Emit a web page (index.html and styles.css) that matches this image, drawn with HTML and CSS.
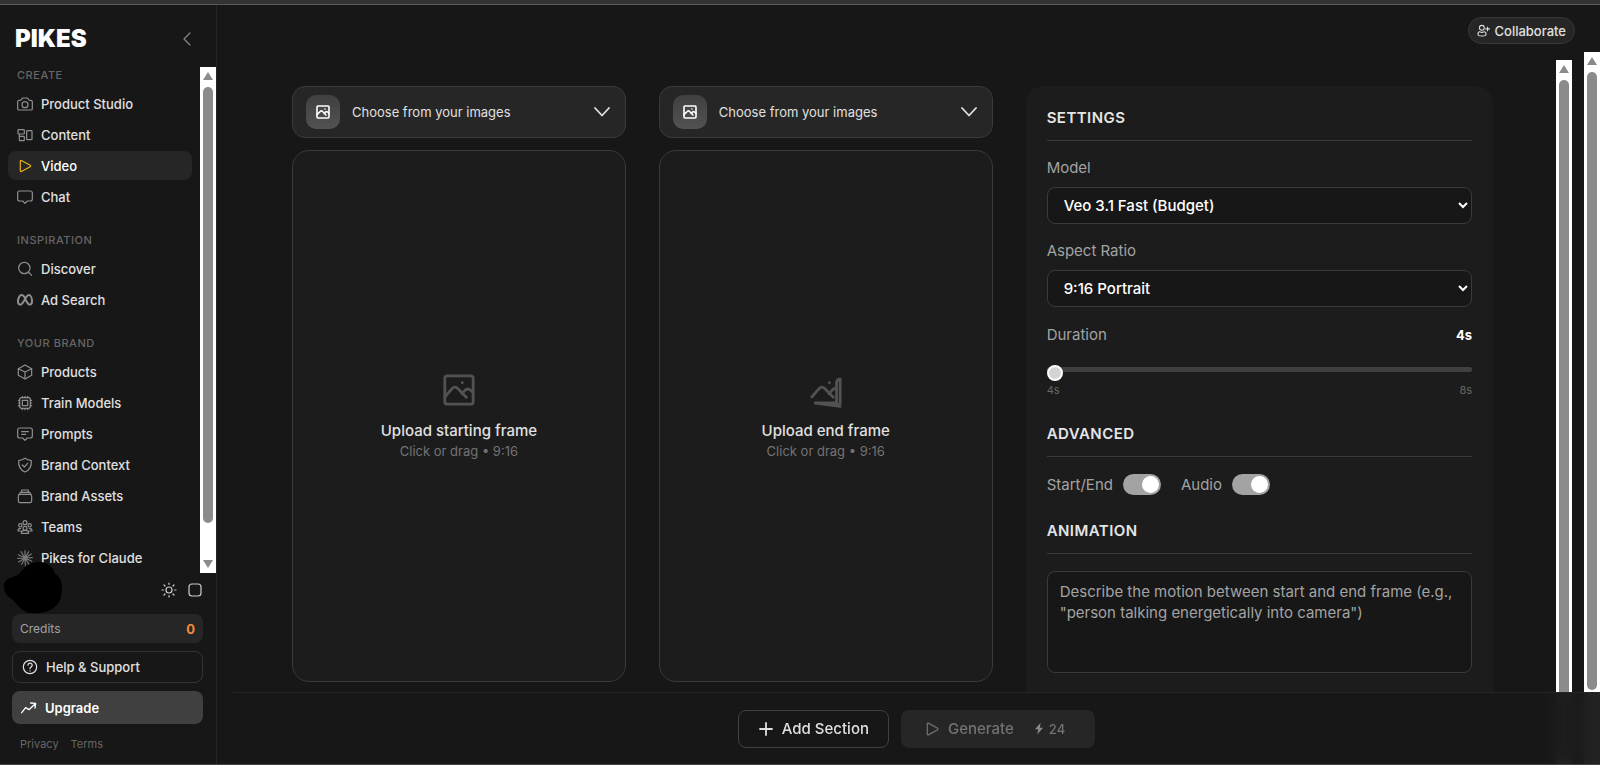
FILE: index.html
```html
<!DOCTYPE html>
<html lang="en">
<head>
    <meta charset="UTF-8">
    <meta name="viewport" content="width=device-width, initial-scale=1.0">
    <title>Pikes - Video</title>
    <link rel="stylesheet" href="styles.css">
</head>
<body>
    <div class="app">
        <aside class="sidebar">
            <div class="sidebar-head">
                <span class="logo">PIKES</span>
                <button class="collapse" aria-label="Collapse sidebar">
                    <svg class="icon" viewBox="0 0 16 16"><path d="M11 2L5 8L11 14"/></svg>
                </button>
            </div>

            <div class="nav-wrap">
                <nav class="nav">
                    <h2>Create</h2>
                    <a href="#"><svg class="icon" viewBox="0 0 24 24"><path d="M1 19V9C1 7.900 1.900 6.500 3.500 6.500H4.500C5.100 6.500 5.700 6.200 6.100 5.700L8 3.400C8.300 3.100 8.600 3 9 3H15C15.400 3 15.700 3.100 16 3.400L17.900 5.700C18.300 6.200 18.900 6.500 19.500 6.500H20.500C22.100 6.500 23 7.900 23 9V19C23 20.100 22.100 21 21 21H3C1.900 21 1 20.100 1 19Z"/><circle cx="12" cy="13" r="4.500"/></svg>Product Studio</a>
                    <a href="#"><svg class="icon" viewBox="0 0 24 24"><rect x="1.500" y="4" width="9.500" height="6.500" rx="1"/><rect x="3.500" y="14" width="7.500" height="6.500" rx="1"/><rect x="14.500" y="5.500" width="8" height="13.500" rx="1"/><path d="M3.500 10.500V14"/></svg>Content</a>
                    <a href="#" class="active"><svg class="icon" viewBox="0 0 24 24"><path d="M5 4.700V19.300C5 20.200 5.900 20.700 6.600 20.300L19.800 13C20.600 12.600 20.600 11.400 19.800 11L6.600 3.700C5.900 3.300 5 3.800 5 4.700Z"/></svg>Video</a>
                    <a href="#"><svg class="icon" viewBox="0 0 24 24"><path d="M1 15V6C1 4.300 2.300 3 4 3H20C21.700 3 23 4.300 23 6V15C23 16.700 21.700 18 20 18H15.500L12 21.500L8.500 18H4C2.300 18 1 16.700 1 15Z"/></svg>Chat</a>

                    <h2>Inspiration</h2>
                    <a href="#"><svg class="icon" viewBox="0 0 24 24"><circle cx="11" cy="10.500" r="8.500"/><path d="M17 16.500L22 21.500"/></svg>Discover</a>
                    <a href="#"><svg class="icon meta" viewBox="0 0 24 24"><path d="M12 9C10.500 6 9 4.500 7 4.500C4 4.500 1.500 9 1.500 14C1.500 17 2.700 19 5 19C7.500 19 9.500 15.500 12 11C14 7.500 15 4.500 17.500 4.500C20.500 4.500 22.500 9 22.500 14C22.500 17 21.300 19 19 19C16.500 19 14.800 15.500 12 10"/></svg>Ad Search</a>

                    <h2>Your Brand</h2>
                    <a href="#"><svg class="icon" viewBox="0 0 24 24"><path d="M12 1.500L22 7V17L12 22.500L2 17V7Z"/><path d="M2 7L12 12L22 7M12 12V22"/></svg>Products</a>
                    <a href="#"><svg class="icon" viewBox="0 0 24 24"><rect x="4" y="4" width="16" height="16" rx="3"/><rect x="8" y="8" width="8" height="8"/><path d="M8 2V4M12 2V4M16 2V4M8 20V22M12 20V22M16 20V22M2 8H4M2 12H4M2 16H4M20 8H22M20 12H22M20 16H22"/></svg>Train Models</a>
                    <a href="#"><svg class="icon" viewBox="0 0 24 24"><path d="M1 15V6C1 4.300 2.300 3 4 3H20C21.700 3 23 4.300 23 6V15C23 16.700 21.700 18 20 18H15.500L12 21.500L8.500 18H4C2.300 18 1 16.700 1 15Z"/><path d="M7 8.500H17M7 12.500H13"/></svg>Prompts</a>
                    <a href="#"><svg class="icon" viewBox="0 0 24 24"><path d="M2.500 5.500C6 5 9 4 12 2C15 4 18 5 21.500 5.500C22 13 19 19.500 12 22.500C5 19.500 2 13 2.500 5.500Z"/><path d="M8 12L11 15L16 9.500"/></svg>Brand Context</a>
                    <a href="#"><svg class="icon" viewBox="0 0 24 24"><rect x="2" y="9.500" width="20" height="12.500" rx="2.500"/><path d="M3.500 9.500L5 6.500H19L20.500 9.500M7 6V3H17V6"/></svg>Brand Assets</a>
                    <a href="#"><svg class="icon" viewBox="0 0 24 24"><circle cx="12" cy="5.500" r="3"/><circle cx="5" cy="9.500" r="2.500"/><circle cx="19" cy="9.500" r="2.500"/><circle cx="12" cy="14" r="3"/><path d="M6.500 21.500C6.500 18.500 9 17 12 17S17.500 18.500 17.500 21.500ZM1.500 18C1.500 15.500 3 14 5.500 14M22.500 18C22.500 15.500 21 14 18.500 14M1.500 18H6.500M17.500 18H22.500"/></svg>Teams</a>
                    <a href="#"><svg class="icon claude" viewBox="0 0 24 24"><path d="M12 12V1M12 12L17.500 2.500M12 12L21.500 6M12 12L23 11.500M12 12L22 17M12 12L18 21.500M12 12L12.500 23M12 12L7 21.500M12 12L2.500 18M12 12L1 12.500M12 12L2 7M12 12L6 2.500"/></svg>Pikes for Claude</a>
                </nav>
                <div class="scrollbar">
                    <i class="arrow up"></i>
                    <i class="thumb nav-thumb"></i>
                    <i class="arrow down"></i>
                </div>
            </div>

            <div class="sidebar-foot">
                <div class="user-row">
                    <svg class="avatar" viewBox="0 0 60 52"><path d="M1 22C3 16 10 15 15 13C20 8 24 1 34 0C43 -1 50 4 52 12C56 14 59 18 59 25C59 35 57 42 49 47C42 51 36 52 28 51C21 51 16 45 11 39C6 35 0 32 1 22Z"/></svg>
                    <button aria-label="Toggle theme"><svg class="icon" viewBox="0 0 24 24"><circle cx="12" cy="12" r="4.500"/><path d="M12 1.500V3.500M12 20.500V22.500M1.500 12H3.500M20.500 12H22.500M4.500 4.500L6 6M18 18L19.500 19.500M4.500 19.500L6 18M18 6L19.500 4.500"/></svg></button>
                    <button aria-label="Toggle layout"><svg class="icon" viewBox="0 0 24 24"><rect x="3" y="3" width="18" height="18" rx="4.500"/></svg></button>
                </div>
                <div class="credits"><span>Credits</span><b>0</b></div>
                <button class="side-button help"><svg class="icon" viewBox="0 0 24 24"><circle cx="12" cy="12" r="10"/><path d="M9 9.300C9 5.300 15.300 5.300 15.300 9.300C15.300 12 12 11.800 12 14.500M12 17.800V17.900"/></svg>Help &amp; Support</button>
                <button class="side-button upgrade"><svg class="icon" viewBox="0 0 24 24"><path d="M1 19L7 11.500L12 14.500L21 6M14.500 4.500L22 5L21 12"/></svg>Upgrade</button>
                <div class="legal"><a href="#">Privacy</a><a href="#">Terms</a></div>
            </div>
        </aside>

        <main class="main">
            <header class="topbar">
                <button class="collaborate"><svg class="icon" viewBox="0 0 24 24"><circle cx="9" cy="7" r="4.500"/><path d="M2.500 21C0.500 17 3 14 5.500 14.500C8 16 10 16 12.500 14.500C16 14 17.500 17.500 16 21C14 22.500 4.500 22.500 2.500 21ZM16 9H23M19.500 5.500V12.500"/></svg>Collaborate</button>
            </header>

            <div class="stage">
                <div class="page">
                    <div class="workspace">
                        <section class="frame">
                            <button class="picker">
                                <span class="tile"><svg class="icon" viewBox="0 0 24 24"><rect x="3" y="3" width="18" height="18" rx="1.500"/><path d="M3 16L7.800 11.200Q9.600 9.400 11.400 11.200L16.400 16.400M13.800 14.200L15.600 12.200Q17.200 10.600 18.800 12L21 14M15 7.500V7.600"/></svg></span>
                                <span>Choose from your images</span>
                                <svg class="icon chevron" viewBox="0 0 16 16"><path d="M1 4L8 11.500L15 4"/></svg>
                            </button>
                            <button class="dropzone">
                                <svg class="icon" viewBox="0 0 24 24"><rect x="3.500" y="3.500" width="17" height="17" rx="1.500"/><path d="M3.500 16.200L7.800 11.200Q9.600 9.400 11.400 11.200L16.400 16.400M13.800 14.200L15.600 12.200Q17.200 10.600 18.800 12L20.500 13.500M14 7.600V7.700"/></svg>
                                <strong>Upload starting frame</strong>
                                <small>Click or drag • 9:16</small>
                            </button>
                        </section>

                        <section class="frame">
                            <button class="picker">
                                <span class="tile"><svg class="icon" viewBox="0 0 24 24"><rect x="3" y="3" width="18" height="18" rx="1.500"/><path d="M3 16L7.800 11.200Q9.600 9.400 11.400 11.200L16.400 16.400M13.800 14.200L15.600 12.200Q17.200 10.600 18.800 12L21 14M15 7.500V7.600"/></svg></span>
                                <span>Choose from your images</span>
                                <svg class="icon chevron" viewBox="0 0 16 16"><path d="M1 4L8 11.500L15 4"/></svg>
                            </button>
                            <button class="dropzone">
                                <svg class="icon" viewBox="0 0 24 24"><path d="M3.500 16.200L7.800 11.200Q9.600 9.400 11.400 11.200L16.400 16.400M13.800 14.200L15.600 12.200Q17.200 10.600 18.200 11.400M14 7.600V7.700M20.500 5.500C19 5.500 18.300 6.500 18.300 8V20C18.300 21 20.500 21 20.500 20ZM5.500 19.800L20.500 21.800L18 19.800Z"/></svg>
                                <strong>Upload end frame</strong>
                                <small>Click or drag • 9:16</small>
                            </button>
                        </section>

                        <form class="settings">
                            <h3>Settings</h3>
                            <label for="model">Model</label>
                            <select id="model">
                                <option>Veo 3.1 Fast (Budget)</option>
                            </select>
                            <label for="ratio">Aspect Ratio</label>
                            <select id="ratio">
                                <option>9:16 Portrait</option>
                            </select>
                            <div class="duration-head">
                                <label for="duration">Duration</label>
                                <output for="duration">4s</output>
                            </div>
                            <input type="range" id="duration" min="4" max="8" step="2" value="4">
                            <div class="limits"><span>4s</span><span>8s</span></div>

                            <h3>Advanced</h3>
                            <div class="toggles">
                                <label for="startEnd">Start/End</label>
                                <input type="checkbox" id="startEnd" checked>
                                <label for="audio">Audio</label>
                                <input type="checkbox" id="audio" checked>
                            </div>

                            <h3>Animation</h3>
                            <textarea aria-label="Animation" placeholder="Describe the motion between start and end frame (e.g., &quot;person talking energetically into camera&quot;)"></textarea>
                        </form>
                    </div>
                    <div class="scrollbar">
                        <i class="arrow up"></i>
                        <i class="thumb"></i>
                    </div>
                </div>
                <div class="scrollbar">
                    <i class="arrow up"></i>
                    <i class="thumb page-thumb"></i>
                </div>
            </div>

            <div class="action-bar">
                <button class="add"><svg class="icon" viewBox="0 0 16 16"><path d="M8 2V14M2 8H14"/></svg>Add Section</button>
                <button class="generate" disabled>
                    <svg class="icon" viewBox="0 0 24 24"><path d="M5 4V20C5 20.900 5.900 21.200 6.600 20.800L20.500 13C21.200 12.600 21.200 11.400 20.500 11L6.600 3.200C5.900 2.800 5 3.100 5 4Z"/></svg>
                    <span>Generate</span>
                    <span class="cost"><svg viewBox="0 0 12 16"><path d="M8 1L1 9H5L4 15L11 7H7Z"/></svg>24</span>
                </button>
            </div>
        </main>
    </div>
</body>
</html>
```
FILE: styles.css
```css
* {
    box-sizing: border-box;
}
body {
    margin: 0;
    height: 100vh;
    border-top: 4px solid #333;
    border-bottom: 1px solid #444;
    background: #171717;
    color: #e0e0e0;
    font-family: Inter, "Liberation Sans", sans-serif;
    font-size: 13px;
    overflow: hidden;
}
button {
    font: inherit;
    color: inherit;
    background: none;
    border: none;
    padding: 0;
    cursor: pointer;
}
a {
    color: inherit;
    text-decoration: none;
}
.icon {
    width: 16px;
    height: 16px;
    flex: none;
    fill: none;
    stroke: currentColor;
    stroke-width: 1.8;
    stroke-linecap: round;
    stroke-linejoin: round;
}
.app {
    display: flex;
    height: 100%;
    border-top: 1px solid #5a5a5a;
}

/* scrollbars */
.scrollbar {
    display: flex;
    flex-direction: column;
    align-items: center;
    flex: none;
    width: 16px;
    padding: 5px 0;
    gap: 7px;
    background: #fff;
}
.arrow {
    border: 5px solid transparent;
}
.arrow.up {
    border-top: none;
    border-bottom: 8px solid #8b8b8b;
}
.arrow.down {
    border-bottom: none;
    border-top: 8px solid #8b8b8b;
    margin-top: auto;
}
.thumb {
    flex: 1;
    width: 10px;
    border-radius: 5px;
    background: #8b8b8b;
}
.nav-thumb {
    flex: 0 1 88%;
}
.page-thumb {
    margin-bottom: 69px;
}

/* sidebar */
.sidebar {
    display: flex;
    flex-direction: column;
    flex: none;
    width: 217px;
    border-right: 1px solid #262626;
}
.sidebar-head {
    display: flex;
    align-items: center;
    justify-content: space-between;
    height: 62px;
    padding: 5px 21px 0 15px;
}
.logo {
    color: #fff;
    font-size: 24px;
    font-weight: 900;
}
.collapse {
    display: flex;
    color: #888;
}
.collapse .icon {
    stroke-width: 1.2;
}
.nav-wrap {
    display: flex;
    flex: 1;
    min-height: 0;
}
.nav {
    display: flex;
    flex-direction: column;
    flex: 1;
    gap: 2px;
    padding: 0 8px;
    overflow: hidden;
}
.nav h2 {
    flex: none;
    margin: 20px 0 5px;
    padding-left: 9px;
    color: #666;
    font-size: 11px;
    font-weight: 500;
    line-height: 14px;
    letter-spacing: 0.05em;
    text-transform: uppercase;
}
.nav h2:first-child {
    margin-top: 1px;
}
.nav a {
    display: flex;
    align-items: center;
    flex: none;
    gap: 8px;
    height: 29px;
    padding-left: 9px;
    border-radius: 8px;
    font-weight: 500;
}
.nav a .icon {
    color: #8f8f8f;
}
.nav a.active {
    background: #262626;
    color: #fff;
}
.nav a.active .icon {
    color: #eab020;
}
.nav a .meta {
    stroke-width: 3;
}
.nav a .claude {
    color: #777;
}
.sidebar-foot {
    display: flex;
    flex-direction: column;
    gap: 8px;
    padding: 0 13px 0 12px;
}
.user-row {
    position: relative;
    display: flex;
    align-items: center;
    justify-content: flex-end;
    gap: 10px;
    height: 33px;
    color: #ccc;
}
.user-row button {
    display: flex;
}
.avatar {
    position: absolute;
    left: -9px;
    top: -11px;
    width: 60px;
    height: 52px;
}
.credits {
    display: flex;
    align-items: center;
    justify-content: space-between;
    height: 29px;
    padding: 0 8px;
    border-radius: 8px;
    background: #262626;
    color: #a3a3a3;
    font-size: 12px;
}
.credits b {
    color: #f58a3c;
    font-size: 13px;
}
.side-button {
    display: flex;
    align-items: center;
    gap: 8px;
    height: 32px;
    padding: 0 9px;
    border-radius: 8px;
    font-weight: 500;
}
.help {
    border: 1px solid #333;
}
.upgrade {
    height: 33px;
    background: #404040;
    color: #fff;
    font-weight: 600;
}
.upgrade .icon {
    stroke-width: 2;
}
.legal {
    display: flex;
    gap: 12px;
    padding: 5px 8px 13px;
    color: #666;
    font-size: 11px;
    line-height: 14px;
}

/* main */
.main {
    position: relative;
    display: flex;
    flex-direction: column;
    flex: 1;
    min-width: 0;
}
.topbar {
    display: flex;
    justify-content: flex-end;
    align-items: center;
    flex: none;
    height: 47px;
    padding: 4px 25px 0 0;
}
.collaborate {
    display: flex;
    align-items: center;
    gap: 5px;
    height: 27px;
    padding: 0 8px;
    border: 1px solid #383838;
    border-radius: 14px;
    background: #262626;
    font-weight: 500;
}
.collaborate .icon {
    width: 13px;
    height: 13px;
    stroke-width: 2;
}
.stage {
    display: flex;
    flex: 1;
    min-height: 0;
}
.page {
    display: flex;
    flex: 1;
    min-width: 0;
    padding: 8px 12px 0 16px;
}
.workspace {
    display: grid;
    grid-template-columns: 5fr 5fr 7fr;
    gap: 33px;
    flex: 1;
    padding: 26px 63px 0 59px;
    overflow: hidden;
}
.frame {
    display: flex;
    flex-direction: column;
    gap: 12px;
    padding-bottom: 82px;
}
.picker {
    display: flex;
    align-items: center;
    gap: 12px;
    height: 52px;
    padding: 0 15px 0 13px;
    border: 1px solid #3a3a3a;
    border-radius: 13px;
    background: #262626;
}
.tile {
    display: flex;
    align-items: center;
    justify-content: center;
    width: 34px;
    height: 34px;
    border-radius: 10px;
    background: linear-gradient(#404040, #525252);
    color: #fff;
}
.tile .icon {
    stroke-width: 2.4;
}
.picker .chevron {
    margin-left: auto;
}
.dropzone {
    display: flex;
    flex-direction: column;
    align-items: center;
    justify-content: center;
    flex: 1;
    border: 1px solid #3a3a3a;
    border-radius: 17px;
    background: #1c1c1c;
}
.dropzone .icon {
    width: 40px;
    height: 40px;
    margin-bottom: 11px;
    color: #525252;
    stroke-width: 1.7;
}
.dropzone strong {
    font-size: 15px;
    font-weight: 500;
    line-height: 20px;
}
.dropzone small {
    color: #737373;
    font-size: 13px;
    line-height: 21px;
}

/* settings panel */
.settings {
    display: flex;
    flex-direction: column;
    padding: 22px 21px 0;
    border-radius: 17px;
    background: #1c1c1c;
    color: #a3a3a3;
    font-size: 15px;
    line-height: 20px;
}
.settings h3 {
    margin: 26px 0 17px;
    padding-bottom: 12px;
    border-bottom: 1px solid #3a3a3a;
    color: #e5e5e5;
    font-size: 15px;
    font-weight: 600;
    letter-spacing: 0.03em;
    text-transform: uppercase;
}
.settings h3:first-child {
    margin-top: 0;
}
.settings select {
    height: 37px;
    margin: 9px 0 17px;
    padding: 0 0 0 12px;
    border: 1px solid #3a3a3a;
    border-radius: 8px;
    background: #171717;
    color: #fff;
    font: inherit;
    font-weight: 500;
}
.duration-head {
    display: flex;
    justify-content: space-between;
    line-height: 22px;
}
.duration-head output {
    color: #fff;
    font-size: 13px;
    font-weight: 700;
}
.settings input[type="range"] {
    appearance: none;
    height: 16px;
    margin: 15px 0 6px;
    background: none;
}
.settings input[type="range"]::-webkit-slider-runnable-track {
    height: 5px;
    border-radius: 3px;
    background: #404040;
}
.settings input[type="range"]::-webkit-slider-thumb {
    appearance: none;
    width: 16px;
    height: 16px;
    margin-top: -2px;
    border: 2px solid #fff;
    border-radius: 50%;
    background: #d4d4d4;
}
.limits {
    display: flex;
    justify-content: space-between;
    color: #666;
    font-size: 11px;
    line-height: 15px;
}
.toggles {
    display: flex;
    align-items: center;
    gap: 10px;
}
.toggles input {
    appearance: none;
    display: flex;
    width: 38px;
    height: 21px;
    margin: 0 10px 0 0;
    padding: 2px;
    border-radius: 11px;
    background: #a3a3a3;
}
.toggles input::after {
    content: "";
    width: 17px;
    height: 17px;
    border-radius: 50%;
    background: #fff;
}
.toggles input:checked {
    justify-content: flex-end;
}
.settings textarea {
    height: 102px;
    padding: 9px 12px;
    border: 1px solid #3a3a3a;
    border-radius: 8px;
    background: #171717;
    color: #fff;
    font: inherit;
    line-height: 21px;
    resize: none;
}
.settings textarea::placeholder {
    color: #a3a3a3;
}

.action-bar {
    position: absolute;
    left: 16px;
    right: 0;
    bottom: 0;
    display: flex;
    align-items: center;
    justify-content: center;
    gap: 12px;
    height: 72px;
    border-top: 1px solid #262626;
    background: rgba(23, 23, 23, 0.95);
    backdrop-filter: blur(8px);
    font-size: 15px;
    font-weight: 500;
}
.action-bar button {
    display: flex;
    align-items: center;
    gap: 8px;
    height: 38px;
    border-radius: 8px;
}
.add {
    padding: 0 19px;
    border: 1px solid #404040;
}
.generate {
    padding: 0 30px 0 23px;
    background: #262626;
    color: #737373;
}
.generate .cost {
    display: flex;
    align-items: center;
    gap: 5px;
    margin-left: 12px;
    font-size: 13px;
}
.cost svg {
    width: 10px;
    height: 13px;
    fill: #8a8a8a;
}
```
